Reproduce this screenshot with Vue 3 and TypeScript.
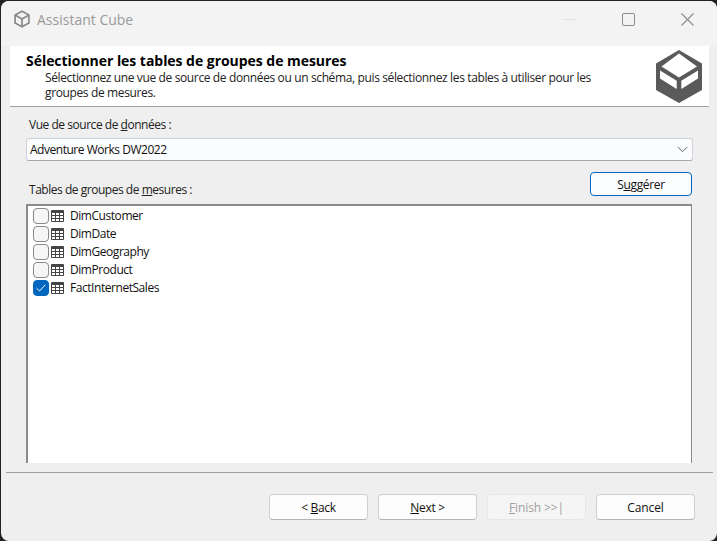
<script setup lang="ts">
const tables = [
  { name: 'DimCustomer', checked: false },
  { name: 'DimDate', checked: false },
  { name: 'DimGeography', checked: false },
  { name: 'DimProduct', checked: false },
  { name: 'FactInternetSales', checked: true },
]
</script>

<template>
  <div class="screen">
    <div class="window">
      <div class="titlebar">
        <svg class="app-icon" width="18" height="18" viewBox="0 0 18 18" fill="none" stroke="#8a8a8a" stroke-width="1.7">
          <path d="M9 1.2 15.900 5v8L9 16.800 2.100 13V5Z" />
          <path d="M2.400 5.200 9 9l6.600-3.800M9 9v7.600" />
        </svg>
        <span class="title">Assistant Cube</span>
        <div class="controls">
          <span class="ctl min"></span>
          <span class="ctl max"></span>
          <svg class="ctl close" width="13" height="13" viewBox="0 0 13 13" stroke="#8c8c8c" stroke-width="1.1">
            <path d="M.5.5l12 12M12.500.5l-12 12" />
          </svg>
        </div>
      </div>

      <div class="banner">
        <div class="banner-text">
          <h1>Sélectionner les tables de groupes de mesures</h1>
          <p>Sélectionnez une vue de source de données ou un schéma, puis sélectionnez les tables à utiliser pour les groupes de mesures.</p>
        </div>
        <svg class="logo" width="46" height="53" viewBox="0 0 46 53">
          <path fill="#5a5a5a" d="M23 0 46 13.500V40L23 53 0 40V13.500Z" />
          <path fill="#fff" d="M23 3.500 41 16.500 23 27.500 5.500 16.500Z" />
          <path fill="#fff" d="M4 20.500 20.700 30.700V39L4 28.500ZM42 20.500 25.300 30.700V39L42 28.500Z" />
        </svg>
      </div>

      <div class="content">
        <label class="field-label first">Vue de source de <u>d</u>onnées :</label>
        <div class="combo">
          <span>Adventure Works DW2022</span>
          <svg width="11" height="7" viewBox="0 0 11 7" fill="none" stroke="#666" stroke-width="1">
            <path d="M.8 1l4.700 4.700L10.200 1" />
          </svg>
        </div>
        <div class="list-head">
          <label class="field-label">Tables de groupes de <u>m</u>esures :</label>
          <button class="btn suggest">S<u>u</u>ggérer</button>
        </div>
        <div class="list">
          <div v-for="t in tables" :key="t.name" class="row">
            <span class="check" :class="{ on: t.checked }">
              <svg v-if="t.checked" width="10" height="8" viewBox="0 0 10 8" fill="none" stroke="#fff" stroke-width="1">
                <path d="M.7 4.300 3.500 7 9.300.8" />
              </svg>
            </span>
            <svg class="tbl" width="13" height="12" viewBox="0 0 13 12" fill="none" stroke="#444" stroke-width="1">
              <path d="M.5.5h12v11H.5Z" />
              <path d="M.5 2h12" stroke-width="2" />
              <path d="M.5 5.500h12M.5 8.500h12M4.500 2v9.500M8.500 2v9.500" />
            </svg>
            <span class="name">{{ t.name }}</span>
          </div>
        </div>
      </div>

      <div class="footer">
        <button class="btn nav">&lt; <u>B</u>ack</button>
        <button class="btn nav"><u>N</u>ext &gt;</button>
        <button class="btn nav finish" disabled><u>F</u>inish &gt;&gt;|</button>
        <button class="btn nav cancel">Cancel</button>
      </div>
    </div>
  </div>
</template>

<style>
html, body { margin: 0; background: #2b2b2b; }
</style>

<style scoped>
.screen {
  width: 717px;
  height: 541px;
  background: #222;
  overflow: hidden;
  font-family: "Open Sans", "Noto Sans", sans-serif;
  font-size: 12px;
  color: #111;
}
.window {
  box-sizing: border-box;
  width: 716px;
  height: 540px;
  margin-left: 1px;
  margin-top: 1px;
  background: #efefef;
  border-radius: 8px;
  display: flex;
  flex-direction: column;
  overflow: hidden;
}
.titlebar {
  height: 45px;
  flex: none;
  background: #f3f3f3;
  display: flex;
  align-items: center;
  padding: 0 0 9px 12px;
  box-sizing: border-box;
}
.app-icon { margin-right: 6px; }
.title {
  font-size: 14px;
  color: #9a9a9a;
}
.controls {
  margin-left: auto;
  display: flex;
  align-items: center;
}
.min { width: 12px; height: 1px; background: #e2e2e2; margin-right: 46px; }
.max { width: 11px; height: 11px; border: 1px solid #8c8c8c; border-radius: 2px; margin-right: 46px; }
.close { margin-right: 23px; }
.banner {
  flex: none;
  box-sizing: border-box;
  height: 61px;
  margin: 0 8px 0 9px;
  background: #fff;
  border-bottom: 1px solid #a0a0a0;
  display: flex;
  padding: 6px 7px 0 16px;
}
.banner-text { width: 590px; }
h1 {
  margin: 0;
  font-size: 14px;
  line-height: 18px;
  font-weight: 700;
  color: #000;
  letter-spacing: -.04px;
}
p {
  margin: 0 0 0 19px;
  font-size: 12px;
  line-height: 15px;
  color: #222;
  letter-spacing: -.37px;
}
.logo { margin-left: auto; margin-top: -2px; }
.content {
  flex: 1;
  min-height: 0;
  display: flex;
  flex-direction: column;
  padding: 10px 24px 0 25px;
}
.field-label {
  display: block;
  padding-left: 3px;
  line-height: 16px;
  letter-spacing: -.47px;
  color: #222;
}
.combo {
  box-sizing: border-box;
  margin-top: 5px;
  height: 23px;
  background: #fbfcfe;
  border: 1px solid #cfd2d6;
  border-bottom-color: #a8a8a8;
  border-radius: 3px;
  display: flex;
  align-items: center;
  justify-content: space-between;
  padding: 0 4px 0 3px;
  letter-spacing: -.47px;
  color: #111;
}
.list-head {
  height: 32px;
  margin-top: 11px;
  display: flex;
  align-items: flex-start;
  justify-content: space-between;
}
.list-head .field-label { margin-top: 10px; }
.btn {
  box-sizing: border-box;
  font: inherit;
  letter-spacing: -.33px;
  color: #111;
  background: #fdfdfd;
  border: 1px solid #cfcfcf;
  border-bottom-color: #b5b5b5;
  border-radius: 4px;
  padding: 0;
}
.suggest {
  width: 102px;
  height: 24px;
  margin-right: 1px;
  border: 1px solid #0067c0;
  background: #fcfdfe;
}
.list {
  box-sizing: border-box;
  flex: 1;
  background: #fff;
  border-top: 2px solid #8a8a8a;
  border-left: 2px solid #8a8a8a;
  border-right: 1px solid #8a8a8a;
  margin-right: 1px;
  padding-top: 1px;
}
.row {
  height: 18px;
  display: flex;
  align-items: center;
  padding-left: 5px;
}
.check {
  box-sizing: border-box;
  width: 16px;
  height: 16px;
  border: 1px solid #8a8a8a;
  border-radius: 4px;
  background: #f6f6f6;
  display: flex;
  align-items: center;
  justify-content: center;
}
.check.on { background: #0067c0; border-color: #0067c0; }
.tbl { margin-left: 2px; }
.name { margin: 0 0 2px 6px; letter-spacing: -.45px; color: #111; }
.footer {
  flex: none;
  box-sizing: border-box;
  height: 69px;
  margin: 9px 4px 0 5px;
  border-top: 1px solid #a0a0a0;
  display: flex;
  justify-content: flex-end;
  gap: 10px;
  padding: 21px 18px 0 0;
}
.nav { width: 99px; height: 26px; }
.nav:disabled { background: #f5f5f5; border-color: #e6e6e6; color: #a0a0a0; }
.finish { letter-spacing: -.1px; }
.cancel { letter-spacing: -.1px; }
</style>
